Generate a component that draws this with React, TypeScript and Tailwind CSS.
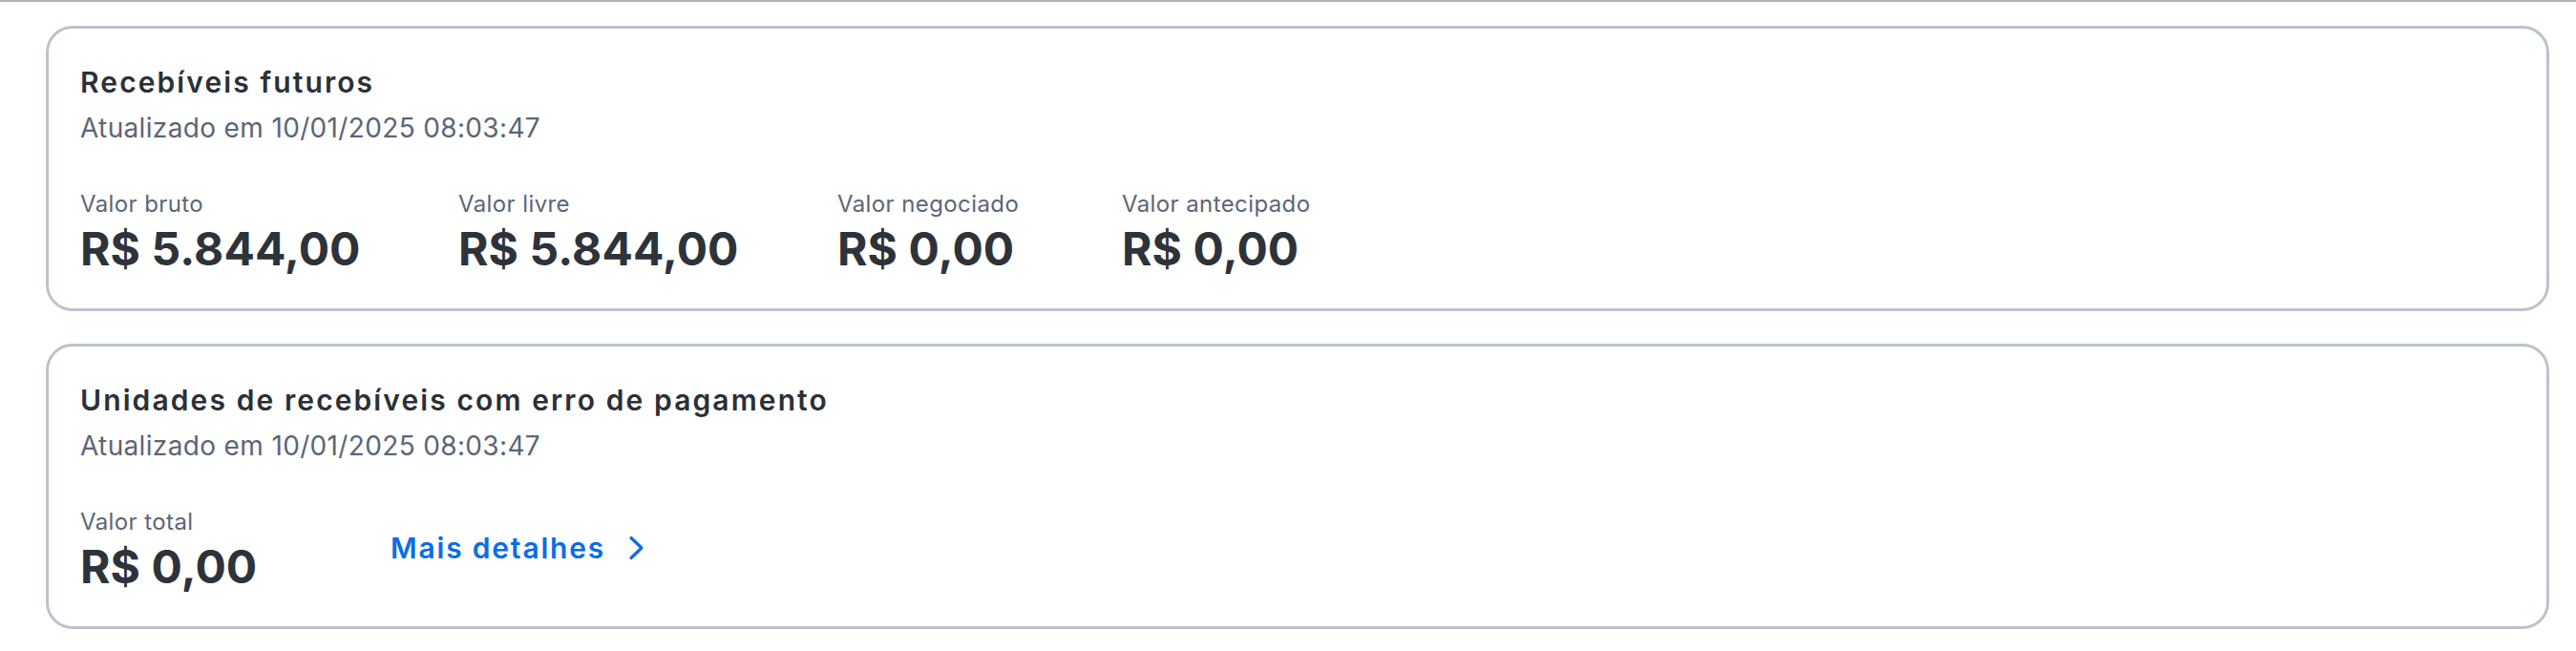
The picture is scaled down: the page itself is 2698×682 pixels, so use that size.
const font = { fontFamily: 'Inter, "Noto Sans", sans-serif' };

interface Metric {
  label: string;
  value: string;
  width?: string;
}

const futuros: Metric[] = [
  { label: 'Valor bruto', value: 'R$ 5.844,00', width: 'w-[396px]' },
  { label: 'Valor livre', value: 'R$ 5.844,00', width: 'w-[397px]' },
  { label: 'Valor negociado', value: 'R$ 0,00', width: 'w-[298px]' },
  { label: 'Valor antecipado', value: 'R$ 0,00' },
];

function MetricItem({ label, value, width = '' }: Metric) {
  return (
    <div className={`flex flex-col shrink-0 ${width}`}>
      <span className="text-[24px] leading-[30px] text-[#5b6677] tracking-[0.4px]">{label}</span>
      <span className="mt-[5px] text-[48px] leading-[54px] font-bold text-[#2e333a] tracking-[0.1px]">
        {value}
      </span>
    </div>
  );
}

function Card({ title, children }: { title: string; children: React.ReactNode }) {
  return (
    <section className="rounded-[28px] border-[3px] border-[#bac3ce] bg-white pl-[33px] pr-8 pt-[38px] pb-[35px]">
      <h2 className="text-[30px] leading-[36px] font-semibold text-[#2b3037] tracking-[2.1px]">{title}</h2>
      <p className="mt-[13px] text-[28px] leading-[34px] text-[#5b6677] tracking-[0.35px]">
        Atualizado em 10/01/2025 08:03:47
      </p>
      <div className="mt-[48px] flex items-center">{children}</div>
    </section>
  );
}

export default function App() {
  return (
    <div style={font} className="min-h-screen bg-white border-t-2 border-[#b0b0b0] pl-[48px] pr-[28px] pt-[25px] flex flex-col gap-[34px]">
      <Card title="Recebíveis futuros">
        {futuros.map((m) => (
          <MetricItem key={m.label} {...m} />
        ))}
      </Card>
      <Card title="Unidades de recebíveis com erro de pagamento">
        <MetricItem label="Valor total" value="R$ 0,00" width="w-[325px]" />
        <a
          href="#"
          className="flex items-center gap-[24px] text-[30px] leading-[36px] font-semibold text-[#0b6de6] tracking-[1.8px] -mt-[6px]"
        >
          Mais detalhes
          <svg className="w-[18px] h-[26px]" viewBox="0 0 18 26" fill="none" stroke="currentColor" strokeWidth={3.2} strokeLinecap="round" strokeLinejoin="round">
            <path d="M3 2.5l11 10.5-11 10.5" />
          </svg>
        </a>
      </Card>
    </div>
  );
}
